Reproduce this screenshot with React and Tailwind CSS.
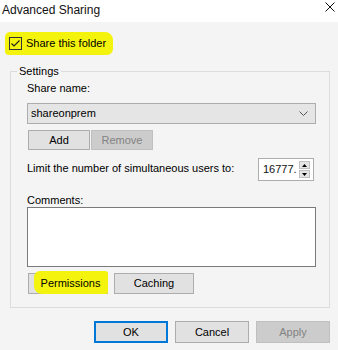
import React from "react";

const font = { fontFamily: '"Liberation Sans", Arial, sans-serif' };

function Btn({ children, className = "", disabled = false }) {
  return (
    <div
      className={
        "flex items-center justify-center border text-[11px] whitespace-nowrap " +
        (disabled
          ? "bg-[#cccccc] border-[#bfbfbf] text-[#838383] "
          : "bg-[#e1e1e1] border-[#adadad] text-black ") +
        className
      }
    >
      {children}
    </div>
  );
}

export default function App() {
  return (
    <div
      className="w-[338px] h-[350px] bg-[#f4f4f4] flex flex-col text-black text-[11px] leading-none overflow-hidden whitespace-nowrap"
      style={font}
    >
      {/* Title bar */}
      <div className="h-[22px] bg-white flex items-start justify-between pl-[2px] pr-[3px] pt-[3px]">
        <span className="text-[12px] leading-[14px] text-[#111]">Advanced Sharing</span>
        <svg width="10" height="10" viewBox="0 0 10 10" className="mt-[-1px]">
          <path d="M0.5 0.5 L9.5 9.5 M9.5 0.5 L0.5 9.5" stroke="#111" strokeWidth="1" />
        </svg>
      </div>

      {/* Share this folder */}
      <div className="pl-[5px] pt-[10px] h-[49px]">
        <div className="flex items-center gap-[4px] bg-[#f4f30e] rounded-tl-[5px] rounded-tr-[8px] rounded-bl-[4px] rounded-br-[6px] pl-[4px] h-[23px] w-[108px]">
          <div className="w-[13px] h-[13px] border border-[#333] flex items-center justify-center">
            <svg width="11" height="11" viewBox="0 0 11 11">
              <path d="M1.5 5.5 L4 8 L9.5 2.5" stroke="#222" strokeWidth="1.2" fill="none" />
            </svg>
          </div>
          <span className="text-[11px]">Share this folder</span>
        </div>
      </div>

      {/* Settings group */}
      <div className="relative ml-[10px] mr-[8px] h-[237px] border border-[#dcdcdc] pt-[10px] pl-[16px] pr-[13px]">
        <span className="absolute left-[6px] top-[-7px] bg-[#f4f4f4] px-[2px] text-[11px] leading-[13px]">Settings</span>

        <div className="h-[11px] pt-[1px]">Share name:</div>
        <div className="mt-[10px] h-[21px] border border-[#adadad] bg-[#e5e5e5] flex items-center justify-between pl-[3px] pr-[7px]">
          <span>shareonprem</span>
          <svg width="9" height="6" viewBox="0 0 9 6">
            <path d="M0.5 0.5 L4.5 4.5 L8.5 0.5" stroke="#555" strokeWidth="1" fill="none" />
          </svg>
        </div>

        <div className="mt-[6px] flex gap-[1px] pl-[1px]">
          <Btn className="w-[62px] h-[20px]">Add</Btn>
          <Btn disabled className="w-[62px] h-[20px]">Remove</Btn>
        </div>

        <div className="mt-[8px] flex items-center justify-between pr-[2px]">
          <span className="mt-[-2px]">Limit the number of simultaneous users to:</span>
          <div className="w-[56px] h-[23px] border border-[#adadad] bg-white flex items-center">
            <span className="pl-[4px] w-[38px] overflow-hidden text-[#111]">16777.</span>
            <div className="flex flex-col gap-[1px] ml-auto mr-[3px]">
              <div className="w-[11px] h-[8px] bg-[#e5e5e5] border border-[#c0c0c0] flex items-center justify-center">
                <svg width="5" height="3" viewBox="0 0 5 3"><path d="M2.5 0 L5 3 L0 3 Z" fill="#000" /></svg>
              </div>
              <div className="w-[11px] h-[8px] bg-[#e5e5e5] border border-[#c0c0c0] flex items-center justify-center">
                <svg width="5" height="3" viewBox="0 0 5 3"><path d="M0 0 L5 0 L2.5 3 Z" fill="#000" /></svg>
              </div>
            </div>
          </div>
        </div>

        <div className="mt-[14px] h-[11px]">Comments:</div>
        <div className="mt-[1px] h-[60px] border border-[#7a7a7a] bg-white"></div>

        <div className="mt-[6px] flex gap-[6px] pl-[1px]">
          <div className="relative w-[80px] h-[21px] bg-[#e1e1e1] border border-[#adadad]">
            <span className="absolute left-[5px] right-[-1px] top-[-3px] bottom-[-1px] bg-[#f4f30e] rounded-tl-[6px] rounded-tr-[3px] rounded-bl-[8px] rounded-br-[2px]"></span>
            <span className="absolute inset-0 flex items-center justify-center pl-[5px]">Permissions</span>
          </div>
          <Btn className="w-[80px] h-[21px]">Caching</Btn>
        </div>
      </div>

      {/* Bottom buttons */}
      <div className="mt-[13px] flex justify-end gap-[7px] pr-[8px]">
        <div className="w-[74px] h-[22px] bg-[#e1e1e1] border-2 border-[#0078d7] flex items-center justify-center">OK</div>
        <Btn className="w-[74px] h-[22px]">Cancel</Btn>
        <Btn disabled className="w-[74px] h-[22px]">Apply</Btn>
      </div>
    </div>
  );
}
